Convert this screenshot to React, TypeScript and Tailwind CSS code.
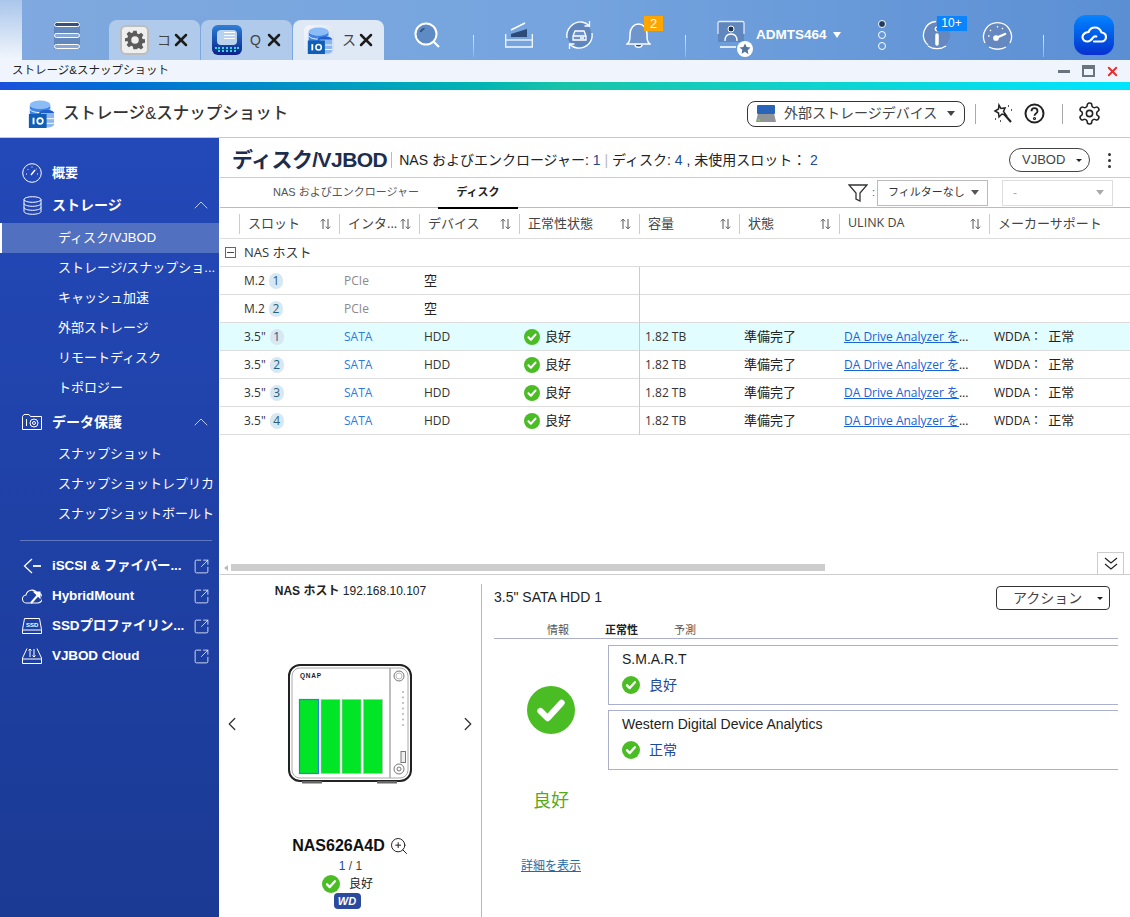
import React from "react";
import { ChevronLeft, ChevronRight, ChevronUp, SquareArrowOutUpRight, X, ZoomIn } from "lucide-react";

const cols = "grid grid-cols-[100px_80px_100px_120px_100px_100px_150px_140px]";

const headers = ["スロット", "インタ...", "デバイス", "正常性状態", "容量", "状態", "ULINK DA", "メーカーサポート"];

const disks = [
  { kind: "M.2", n: 1, bus: "PCIe", dev: "空" },
  { kind: "M.2", n: 2, bus: "PCIe", dev: "空" },
  { kind: '3.5"', n: 1, bus: "SATA", dev: "HDD", ok: true, selected: true },
  { kind: '3.5"', n: 2, bus: "SATA", dev: "HDD", ok: true },
  { kind: '3.5"', n: 3, bus: "SATA", dev: "HDD", ok: true },
  { kind: '3.5"', n: 4, bus: "SATA", dev: "HDD", ok: true },
];

const CheckDot = ({ size }: { size: number }) => (
  <svg width={size} height={size} viewBox="0 0 20 20" className="shrink-0">
    <circle cx="10" cy="10" r="10" fill="#4bbd24" />
    <path d="M5.600 10.400l3 3 5.800-6.400" fill="none" stroke="#fff" strokeWidth="2.600" strokeLinecap="round" strokeLinejoin="round" />
  </svg>
);

const SortIcon = () => (
  <svg width="11" height="12" viewBox="0 0 11 12" className="shrink-0" fill="none" stroke="#555" strokeWidth="1">
    <path d="M3 11V1.200M.8 3.400L3 1.200l2.200 2.200M8 1v9.800M5.800 8.600L8 10.800l2.200-2.200" />
  </svg>
);

const StorageLogo = ({ size }: { size: number }) => (
  <svg width={size} height={size} viewBox="0 0 28 30">
    <ellipse cx="13" cy="5" rx="11" ry="4.500" fill="#8cbcf5" />
    <path d="M2 5v12h22V5c0 2.500-5 4.500-11 4.500S2 7.500 2 5z" fill="#3f86e8" />
    <path d="M2 10c2 2.500 6 3.500 11 3.500S22 12.500 24 10" stroke="#fff" fill="none" />
    <ellipse cx="20" cy="14" rx="8" ry="3.500" fill="#1f5fd0" />
    <path d="M14 14h14v12c0 2-3 3.500-7 3.500h-7z" fill="#8db6ee" />
    <path d="M15 20h13M15 25h13" stroke="#fff" />
    <rect x="1" y="15" width="19" height="15" fill="#0f5fb8" />
    <rect x="5" y="19" width="2" height="7" fill="#fff" />
    <circle cx="13" cy="22.500" r="3" fill="none" stroke="#fff" strokeWidth="1.800" />
  </svg>
);

const GearTile = () => (
  <div className="w-[29px] h-[30px] rounded-md bg-[#efefef] border-2 border-[#bdbdbd] flex items-center justify-center">
    <svg width="20" height="20" viewBox="0 0 24 24" fill="#5c5c5c">
      <path fillRule="evenodd" d="M10 1h4l.6 3.200 2 .8 2.700-1.800 2.800 2.800-1.800 2.700.8 2 3.200.6v4l-3.200.6-.8 2 1.800 2.700-2.800 2.800-2.700-1.800-2 .8L14 23h-4l-.6-3.200-2-.8-2.700 1.800-2.800-2.800 1.800-2.700-.8-2L-.3 14v-4l3.200-.6.8-2L1.900 4.700l2.800-2.800 2.700 1.800 2-.8zM12 7.500a4.500 4.500 0 100 9 4.500 4.500 0 000-9z" />
    </svg>
  </div>
);

const QTile = () => (
  <div className="w-[30px] h-[30px] rounded-md bg-gradient-to-b from-[#2f7fd8] to-[#10218a] flex flex-col items-center pt-[5px]">
    <div className="w-[20px] h-[15px] rounded-sm bg-[#b9d3ef] flex flex-col gap-[2px] p-[2px] pl-[7px]">
      <div className="h-px bg-white" />
      <div className="h-px bg-white" />
      <div className="h-px bg-white" />
    </div>
    <div className="mt-[1px] w-[24px] h-[3px] border-b-2 border-dotted border-[#38d6e0]" />
    <div className="w-[18px] h-[3px] border-b-2 border-dotted border-[#38d6e0]" />
  </div>
);

const Tab = ({ icon, label, active }: { icon: React.ReactNode; label: string; active?: boolean }) => (
  <div className={`w-[91px] h-10 rounded-t-lg flex items-center pl-[11px] ${active ? "bg-[#dfe9f6]" : "bg-[#afcaea]"}`}>
    {icon}
    <span className="ml-2 w-[17px] text-[14px] text-[#444] leading-none">{label}</span>
    <X size={20} strokeWidth={3} className="-ml-[3px] text-[#1c1c1c]" />
  </div>
);

const TopSep = () => <div className="w-px h-[22px] mt-[22px] bg-gradient-to-b from-[#dbe7f6] to-[#8fb2e2]" />;

const TopBar = () => (
  <div className="h-[60px] shrink-0 flex bg-gradient-to-r from-[#7fa9df] via-[#75a4de] to-[#5b8fd4]">
    <div className="w-[22px] shrink-0 bg-gradient-to-b from-[#a9c6ea] to-[#f2f6fc]" />
    <div className="flex-1 h-[50px] self-end flex items-center">
      <div className="ml-[32px] w-[26px] flex flex-col gap-[6px] bg-[#6288bd]">
        <div className="h-[5px] rounded-full border border-white bg-[#34507c]" />
        <div className="h-[5px] rounded-full border border-white bg-[#88a9d6]" />
        <div className="h-[5px] rounded-full border border-white bg-[#88a9d6]" />
      </div>
      <div className="ml-[29px] self-end flex gap-px">
        <Tab icon={<GearTile />} label="コ" />
        <Tab icon={<QTile />} label="Q" />
        <Tab
          icon={
            <div className="w-[30px] h-[30px] rounded-md bg-gradient-to-br from-[#f4f7fb] to-[#cfdcec] flex items-center justify-center">
              <StorageLogo size={27} />
            </div>
          }
          label="ス"
          active
        />
      </div>
      <svg className="ml-[30px]" width="27" height="27" viewBox="0 0 27 27" fill="none" stroke="#fff" strokeWidth="2">
        <circle cx="12" cy="12" r="10.500" fill="#5f8bc4" />
        <path d="M6.500 10c.8-2 2-3 4-3.500" stroke="#2d4a78" strokeWidth="1.800" />
        <path d="M20 20l5 5" strokeWidth="2.200" />
      </svg>
      <div className="ml-[32px]"><TopSep /></div>
      <svg className="ml-[31px]" width="28" height="26" viewBox="0 0 28 26" fill="none">
        <path d="M.7 12v13h26.600V12" stroke="#f4f8fd" strokeWidth="1.300" />
        <path d="M1 18h26" stroke="#f4f8fd" strokeWidth="1.300" />
        <path d="M6 12l16-5v8H6z" fill="#2d4a78" />
        <path d="M6 8l14-7" stroke="#fff" strokeWidth="1.500" />
      </svg>
      <svg className="ml-[32px]" width="29" height="30" viewBox="0 0 29 30" fill="none" stroke="#fff" strokeWidth="1.300">
        <circle cx="14.500" cy="15" r="12" fill="#5f86bd" stroke="none" />
        <path d="M2 18C.5 9 8 1.500 17 2c3 .3 5 1.500 7 3.500M27 13c1.500 9-6 16-15 15-3-.3-5-1.500-7-3.500" />
        <path d="M24.500 1v5h-5M4.500 29v-5h5" />
        <path d="M10 11h9l2 5v4H8v-4z" fill="#6c92c8" />
        <path d="M8 16h13M15 18h4" />
      </svg>
      <div className="relative ml-[32px] w-[25px] h-[28px]">
        <svg width="25" height="28" viewBox="0 0 25 28" fill="none" stroke="#fff" strokeWidth="1.500">
          <path d="M1 23c3-2 3-5 3-10 0-6 4-10 8.500-10S21 7 21 13c0 5 0 8 3 10z" fill="#6e96cc" />
          <path d="M9 24c.5 3 6.500 3 7 0" fill="#2d4a78" />
        </svg>
        <span className="absolute left-[18px] top-[-5px] w-[19px] h-[15px] bg-[#ffa500] text-white text-[13px] leading-[15px] text-center">2</span>
      </div>
      <div className="ml-[34px]"><TopSep /></div>
      <div className="relative ml-[31px] w-[28px] h-[30px]">
        <svg width="28" height="30" viewBox="0 0 28 30" fill="none" stroke="#fff" strokeWidth="1.300">
          <path d="M1 2h26v20H1z" fill="#5f86bd" stroke="none" />
          <path d="M1 14V3a1.500 1.500 0 011.500-1.500h23A1.500 1.500 0 0127 3v11" strokeOpacity=".8" />
          <circle cx="14" cy="9" r="3" fill="#1f3557" strokeWidth="1" />
          <path d="M8 21c0-4 2-7 6-7s6 3 6 7" />
          <path d="M3 27h16" strokeWidth="1.600" />
        </svg>
        <div className="absolute left-[20px] top-[21px] w-4 h-4 rounded-full bg-white flex items-center justify-center">
          <svg width="12" height="12" viewBox="0 0 12 12">
            <path d="M6 .5l1.700 3.600 3.800.5-2.800 2.700.7 3.900L6 8.800l-3.400 1.900.7-3.900L.5 4.600l3.800-.5z" fill="#54749f" />
          </svg>
        </div>
      </div>
      <span className="ml-[11px] text-white text-[13.500px] font-bold">ADMTS464</span>
      <span className="ml-[6px] w-0 h-0 border-x-[4px] border-x-transparent border-t-[6px] border-t-white" />
      <div className="ml-[37px] flex flex-col gap-[3px]">
        <div className="w-[8px] h-[8px] rounded-full border border-white bg-[#23395d]" />
        <div className="w-[8px] h-[8px] rounded-full border border-white" />
        <div className="w-[8px] h-[8px] rounded-full border border-white" />
      </div>
      <div className="relative ml-[36px] w-[30px] h-[30px]">
        <svg width="30" height="30" viewBox="0 0 30 30" fill="none" stroke="#fff" strokeWidth="1.300">
          <circle cx="15" cy="15" r="13" fill="#6488bf" stroke="none" />
          <path d="M6 25A13.500 13.500 0 0114 1.500M24 26c-5 3.500-13 3.500-18 0" />
          <path d="M15 15v9" strokeWidth="3.500" strokeLinecap="round" />
          <circle cx="15" cy="9" r="1.800" />
        </svg>
        <span className="absolute left-[15px] top-[-4px] w-[30px] h-[15px] bg-[#0a84ff] text-white text-[12px] font-medium leading-[15px] text-center">10+</span>
      </div>
      <svg className="ml-[30px]" width="31" height="31" viewBox="0 0 31 31" fill="none" stroke="#fff" strokeWidth="1.300">
        <circle cx="15.500" cy="15.500" r="14" fill="#6488bf" stroke="none" />
        <path d="M3 23A14 14 0 1128 23" />
        <path d="M7 27c5 3 12 3 17 0" />
        <path d="M14 18l9-4" strokeWidth="2.400" strokeLinecap="round" />
        <path d="M6 16h1.500M8 10l1 1M15.500 6v1.500M21 8l-1 1" strokeWidth="1.300" />
        <circle cx="14" cy="18" r="2.200" fill="#fff" />
      </svg>
      <div className="ml-[30px]"><TopSep /></div>
      <div className="ml-[30px] w-10 h-10 rounded-xl bg-gradient-to-b from-[#0a84ff] to-[#0a2fd0] flex items-center justify-center">
        <svg width="26" height="18" viewBox="0 0 26 18" fill="none" stroke="#fff" strokeWidth="2.200" strokeLinecap="round" strokeLinejoin="round">
          <path d="M13 15.500h7.500a4.500 4.500 0 000-9c-1-3-3.800-5-6.500-5-3 0-5.500 1.800-6.500 4.500-3.300.3-6 2.600-6 5 0 2.800 2.400 4.500 5 4.500 3 0 4.200-2 5.200-3.500.8-1.300 2.100-2 3.600-1.500" />
        </svg>
      </div>
    </div>
  </div>
);

const TitleStrip = () => (
  <>
    <div className="h-[22px] shrink-0 flex items-center bg-[#f0f5fd] pl-3 pr-[10px]">
      <span className="text-[11.500px] text-[#222] flex-1">ストレージ&スナップショット</span>
      <div className="w-3 h-[3px] bg-[#6b7280]" />
      <div className="ml-3 w-[13px] h-3 border-2 border-t-4 border-[#6b7280]" />
      <X size={15} strokeWidth={3} className="ml-[10px] text-[#ee2a2a]" />
    </div>
    <div className="h-2 shrink-0 bg-gradient-to-r from-[#1a50dc] via-[#18c4a8] to-[#00e5ff]" />
  </>
);

const AppHeader = () => (
  <div className="h-12 shrink-0 flex items-center bg-white border-b border-[#c8c8c8] pl-[27px] pr-7">
    <StorageLogo size={28} />
    <span className="ml-[8px] text-[16.500px] font-medium text-[#333] flex-1">ストレージ&スナップショット</span>
    <div className="w-[218px] h-[26px] rounded-lg border border-[#333] flex items-center pl-2 pr-[9px]">
      <svg width="20" height="18" viewBox="0 0 20 18">
        <path d="M2 8h16l2 9H0z" fill="#8f9497" />
        <rect x="1" y="0" width="18" height="9" rx="1" fill="#2a64b8" />
        <circle cx="3" cy="15" r="1" fill="#6fdc4a" />
      </svg>
      <span className="ml-2 text-[14px] text-[#444] flex-1">外部ストレージデバイス</span>
      <span className="w-0 h-0 border-x-[4px] border-x-transparent border-t-[5px] border-t-[#444]" />
    </div>
    <div className="ml-[10px] w-px h-5 bg-[#aaa]" />
    <svg className="ml-4" width="21" height="21" viewBox="0 0 21 21" fill="none" stroke="#222" strokeWidth="1.500">
      <path d="M7 2l2 3.500 4-.5-1.500 3.500L14 12l-4-1-3 3-.5-4L3 8l3.500-2z" />
      <path d="M12 11l7 8" strokeWidth="2" />
      <path d="M16 3h1M19 7h1M3 16h1M8 18h1" />
    </svg>
    <svg className="ml-[11px]" width="21" height="21" viewBox="0 0 21 21" fill="none" stroke="#222" strokeWidth="2">
      <circle cx="10.500" cy="10.500" r="9" />
      <path d="M7.500 8.200c0-4 6-4 6 0 0 2.300-3 2.300-3 4.500" strokeWidth="1.800" />
      <circle cx="10.500" cy="15.500" r=".6" />
    </svg>
    <div className="ml-[17px] w-px h-5 bg-[#aaa]" />
    <svg className="ml-[14px]" width="25" height="25" viewBox="0 0 24 24" fill="none" stroke="#222" strokeWidth="1.500">
      <path d="M12.220 2h-.44a2 2 0 0 0-2 2v.18a2 2 0 0 1-1 1.730l-.43.25a2 2 0 0 1-2 0l-.15-.08a2 2 0 0 0-2.730.73l-.22.38a2 2 0 0 0 .73 2.730l.15.10a2 2 0 0 1 1 1.720v.51a2 2 0 0 1-1 1.740l-.15.09a2 2 0 0 0-.73 2.730l.22.38a2 2 0 0 0 2.730.73l.15-.08a2 2 0 0 1 2 0l.43.25a2 2 0 0 1 1 1.730V20a2 2 0 0 0 2 2h.44a2 2 0 0 0 2-2v-.18a2 2 0 0 1 1-1.730l.43-.25a2 2 0 0 1 2 0l.15.08a2 2 0 0 0 2.730-.73l.22-.39a2 2 0 0 0-.73-2.730l-.15-.08a2 2 0 0 1-1-1.740v-.5a2 2 0 0 1 1-1.740l.15-.09a2 2 0 0 0 .73-2.730l-.22-.38a2 2 0 0 0-2.730-.73l-.15.08a2 2 0 0 1-2 0l-.43-.25a2 2 0 0 1-1-1.730V4a2 2 0 0 0-2-2z" />
      <circle cx="12" cy="12" r="3" />
    </svg>
  </div>
);

const NavHead = ({ icon, label }: { icon: React.ReactNode; label: string }) => (
  <div className="h-8 flex items-center pl-[22px] pr-[6px] text-white">
    <div className="w-[20px] flex justify-center">{icon}</div>
    <span className="ml-[10px] flex-1 text-[14px] font-bold">{label}</span>
    <ChevronUp size={24} strokeWidth={0.8} className="text-[#e6ebf8]" />
  </div>
);

const NavItem = ({ label, active }: { label: string; active?: boolean }) => (
  <div className={`h-[30px] flex items-center text-[13px] text-white whitespace-nowrap ${active ? "bg-[#5270c0] border-l-2 border-white pl-[56px]" : "pl-[58px]"}`}>
    {label}
  </div>
);

const LinkItem = ({ icon, label }: { icon: React.ReactNode; label: string }) => (
  <div className="h-[30px] flex items-center pl-[22px] pr-[9px] text-white">
    <div className="w-5 flex justify-center">{icon}</div>
    <span className="ml-[10px] flex-1 whitespace-nowrap text-[13.500px] font-bold tracking-[-0.1px]">{label}</span>
    <SquareArrowOutUpRight size={17} strokeWidth={1.100} className="shrink-0 -ml-[4px]" />
  </div>
);

const Sidebar = () => (
  <div className="w-[219px] shrink-0 bg-gradient-to-b from-[#2348b8] to-[#1b3a94] pt-[19px]">
    <div className="h-8 flex items-center pl-[22px] text-white">
      <div className="w-5 flex justify-center">
        <svg width="20" height="20" viewBox="0 0 20 20" fill="none" stroke="#fff" strokeWidth="1">
          <circle cx="10" cy="10" r="9.300" />
          <path d="M4 11h1M5.500 6l.8.8M10 3.500v1M14.500 6l-.8.8M15 11h1" />
          <path d="M9 12l4-5" strokeWidth="1.400" />
        </svg>
      </div>
      <span className="ml-[10px] text-[13px] font-bold">概要</span>
    </div>
    <NavHead
      icon={
        <svg width="19" height="19" viewBox="0 0 19 19" fill="none" stroke="#fff" strokeWidth="1">
          <ellipse cx="9.500" cy="3.500" rx="8.500" ry="2.800" />
          <path d="M1 3.500v12c0 1.500 3.800 2.800 8.500 2.800s8.500-1.300 8.500-2.800v-12" />
          <path d="M1 7.500c0 1.500 3.800 2.800 8.500 2.800S18 9 18 7.500M1 11.500c0 1.500 3.800 2.800 8.500 2.800s8.500-1.300 8.500-2.800" />
        </svg>
      }
      label="ストレージ"
    />
    <div className="mt-[2px]">
      <NavItem label="ディスク/VJBOD" active />
      <NavItem label="ストレージ/スナップショ..." />
      <NavItem label="キャッシュ加速" />
      <NavItem label="外部ストレージ" />
      <NavItem label="リモートディスク" />
      <NavItem label="トポロジー" />
    </div>
    <div className="mt-[3px]">
      <NavHead
        icon={
          <svg width="20" height="16" viewBox="0 0 20 16" fill="none" stroke="#fff" strokeWidth="1">
            <path d="M.5 2.500V15.500h19v-13h-11L7 .5H2z" />
            <path d="M4.500 5v7" />
            <circle cx="12" cy="9" r="4" />
            <circle cx="12" cy="9" r="1.500" />
          </svg>
        }
        label="データ保護"
      />
    </div>
    <div className="mt-px">
      <NavItem label="スナップショット" />
      <NavItem label="スナップショットレプリカ" />
      <NavItem label="スナップショットボールト" />
    </div>
    <div className="mt-[11px] ml-[20px] mr-[7px] h-px bg-[#5f78bd]" />
    <div className="mt-[10px]">
      <LinkItem
        label="iSCSI & ファイバー..."
        icon={
          <svg width="18" height="16" viewBox="0 0 18 16" fill="none" stroke="#fff" strokeWidth="1.300">
            <path d="M9 1L1.500 8 9 15" />
            <path d="M10 8h8" strokeWidth="1.800" />
          </svg>
        }
      />
      <LinkItem
        label="HybridMount"
        icon={
          <svg width="20" height="15" viewBox="0 0 20 15" fill="none" stroke="#fff" strokeWidth="1.100">
            <path d="M5 14a4 4 0 01-1-8 6 6 0 0111-2 5 5 0 011 10z" />
            <path d="M9 14l8-9" strokeWidth="2" />
            <path d="M12 3h6v6z" fill="#fff" />
          </svg>
        }
      />
      <LinkItem
        label="SSDプロファイリン..."
        icon={
          <svg width="20" height="16" viewBox="0 0 20 16" fill="none" stroke="#fff" strokeWidth="1">
            <path d="M2.500.5h15l2 11v4H.5v-4z" />
            <path d="M.5 12h19" />
            <text x="4" y="9" fontSize="6" fontWeight="700" fill="#fff" stroke="none">SSD</text>
          </svg>
        }
      />
      <LinkItem
        label="VJBOD Cloud"
        icon={
          <svg width="20" height="16" viewBox="0 0 20 16" fill="none" stroke="#fff" strokeWidth="1">
            <path d="M5 .5L.5 10v5.500h19V10L15 .5" />
            <path d="M.5 11h19M8 1v8M6.500 2.500L8 1l1.500 1.500M12 9V1M10.500 7.500L12 9l1.500-1.500" />
          </svg>
        }
      />
    </div>
  </div>
);

const DiskTable = () => (
  <div className="flex-1 min-h-0 font-['Open_Sans','Noto_Sans_CJK_JP',sans-serif]">
    <div className={`${cols} h-[31px] pl-[19px] pt-px items-center border-b border-[#ddd] text-[13px] text-[#444]`}>
      {headers.map((h, i) => (
        <div key={h} className={`h-5 border-l border-[#ccc] flex items-center pl-2 ${i === 7 ? "" : "pr-[8px]"}`}>
          <span className={`flex-1 whitespace-nowrap ${i === 6 ? "text-[12.500px]" : ""}`}>{h}</span>
          {i < 7 && <SortIcon />}
        </div>
      ))}
    </div>
    <div className="h-7 flex items-center border-b border-[#ddd] pl-[5px]">
      <div className="w-[11px] h-[11px] border border-[#666] flex items-center justify-center">
        <div className="w-[7px] h-px bg-[#444]" />
      </div>
      <span className="ml-2 text-[13px] text-[#333]">NAS ホスト</span>
    </div>
    {disks.map((d) => (
      <div key={d.kind + d.n} className={`${cols} h-7 pl-5 items-center border-b border-[#ddd] text-[12px] text-[#333] ${d.selected ? "bg-[#e2fdff]" : ""}`}>
        <div className="pl-1 flex items-center">
          <span>{d.kind}</span>
          <span className="ml-[4px] w-[14px] h-[16px] rounded-full bg-[#d8e8f2] text-center leading-[16px] text-[#25607f]">{d.n}</span>
        </div>
        <div className={`pl-1 ${d.bus === "SATA" ? "text-[#2a7be4]" : "text-[#8a8a8a]"}`}>{d.bus}</div>
        <div className={`pl-1 ${d.dev === "空" ? "text-[13px] text-[#222]" : ""}`}>{d.dev}</div>
        <div className="pl-1 flex items-center">
          {d.ok && <CheckDot size={16} />}
          {d.ok && <span className="ml-[5px] text-[13px] text-[#222]">良好</span>}
        </div>
        <div className="h-7 -ml-px border-l border-[#ccc] pl-[5px] leading-[28px]">{d.ok && "1.82 TB"}</div>
        <div className="pl-1 text-[13px] text-[#222]">{d.ok && "準備完了"}</div>
        <div className="pl-1 whitespace-nowrap text-[#222]">
          {d.ok && (
            <>
              <span className="text-[#1a62d6] underline">DA Drive Analyzer を</span>...
            </>
          )}
        </div>
        <div className="pl-1 text-[#222] whitespace-nowrap">
          {d.ok && (
            <>
              WDDA： <span className="ml-[3px] text-[13px]">正常</span>
            </>
          )}
        </div>
      </div>
    ))}
  </div>
);

const NasDrawing = () => (
  <svg width="124" height="120" viewBox="0 0 124 120">
    <rect x="1" y="1" width="122" height="116" rx="11" fill="#fff" stroke="#222" strokeWidth="2" />
    <rect x="4" y="4" width="116" height="110" rx="8" fill="none" stroke="#aaa" />
    <path d="M102 4v110" stroke="#aaa" strokeWidth="1.500" />
    <text x="12" y="13.500" fontSize="6.500" fontWeight="800" letterSpacing=".8" fill="#222">QNAP</text>
    <rect x="11.500" y="35.500" width="19" height="74" fill="#00e526" stroke="#2a7fe0" strokeWidth="1.200" />
    <rect x="33" y="35.500" width="19" height="74" fill="#00e526" stroke="#bbb" strokeWidth=".6" />
    <rect x="54" y="35.500" width="19" height="74" fill="#00e526" stroke="#bbb" strokeWidth=".6" />
    <rect x="75.500" y="35.500" width="19" height="74" fill="#00e526" stroke="#bbb" strokeWidth=".6" />
    <circle cx="111" cy="12" r="5" fill="none" stroke="#777" />
    <circle cx="111" cy="12" r="3" fill="none" stroke="#bbb" />
    {[28, 33.500, 39, 44.500, 50, 55.500, 61].map((y) => (
      <circle key={y} cx="115" cy={y} r=".9" fill="#aaa" />
    ))}
    <rect x="113" y="87.500" width="4.500" height="11" fill="#eee" stroke="#777" />
    <circle cx="111" cy="105" r="5" fill="none" stroke="#777" />
    <circle cx="111" cy="105" r="2" fill="none" stroke="#777" />
    <rect x="14" y="117" width="20" height="2.500" fill="#666" />
    <rect x="89" y="117" width="20" height="2.500" fill="#666" />
  </svg>
);

const SmartCard = ({ title, status }: { title: string; status: string }) => (
  <div className="h-[60px] border-y border-l border-[#aab0cc] pl-[13px] pt-[5px]">
    <div className="text-[14px] leading-4 text-[#222]">{title}</div>
    <div className="mt-[8px] flex items-center h-[20px]">
      <CheckDot size={18} />
      <span className="ml-[9px] text-[14px] text-[#1c4a9c]">{status}</span>
    </div>
  </div>
);

const DetailPane = () => (
  <div className="relative h-[343px] shrink-0 border-t border-[#ccc] flex">
    <div className="w-[261px] shrink-0 flex flex-col items-center pt-[8px]">
      <div className="text-[12px] leading-4 text-[#222]"><b>NAS ホスト</b> 192.168.10.107</div>
      <div className="mt-[65px] w-full pl-px pr-[2px] flex items-center justify-between">
        <ChevronLeft size={22} strokeWidth={1.400} className="text-[#333]" />
        <NasDrawing />
        <ChevronRight size={22} strokeWidth={1.400} className="text-[#333]" />
      </div>
      <div className="mt-[52px] flex items-center h-5">
        <span className="text-[16px] font-bold text-[#111]">NAS626A4D</span>
        <ZoomIn size={20} strokeWidth={1.200} className="ml-[4px] text-[#222]" />
      </div>
      <div className="mt-[2px] text-[12px] leading-[16px] text-[#444]"><span className="text-[#1c4a9c]">1</span> / 1</div>
      <div className="flex items-center h-5 -ml-[6px]">
        <CheckDot size={18} />
        <span className="ml-[9px] text-[12px] text-[#222]">良好</span>
      </div>
      <div className="-mt-[1px] -ml-[7px] w-[27px] h-[16px] rounded-sm bg-[#2b4a9e] text-white text-[11px] font-black italic leading-[16px] text-center">WD</div>
    </div>
    <div className="mt-[9px] w-px bg-[#b5b5c5]" />
    <div className="flex-1 pl-3 pr-3 pt-[11px]">
      <div className="h-6 flex items-center justify-between">
        <span className="pb-[2px] text-[14px] text-[#222]">3.5" SATA HDD 1</span>
        <div className="w-[114px] h-6 mr-2 rounded border border-[#333] flex items-center pl-4 pr-[6px]">
          <span className="flex-1 text-[14px] text-[#444]">アクション</span>
          <span className="w-0 h-0 border-x-[3px] border-x-transparent border-t-[3px] border-t-[#222]" />
        </div>
      </div>
      <div className="h-[29px] pt-[12px] pl-[53px] flex items-center gap-[36px] text-[11px] text-[#555] border-b border-[#aab0cc]">
        <span>情報</span>
        <b className="text-[#222]">正常性</b>
        <span>予測</span>
      </div>
      <div className="flex">
        <div className="w-[114px] shrink-0 flex flex-col items-center">
          <div className="mt-[47px]"><CheckDot size={48} /></div>
          <div className="mt-[53px] text-[18px] leading-7 text-[#58a81c]">良好</div>
          <div className="mt-[43px] text-[12px] leading-4 text-[#1f6aa5] underline">詳細を表示</div>
        </div>
        <div className="flex-1 pt-[6px] flex flex-col gap-[5px]">
          <SmartCard title="S.M.A.R.T" status="良好" />
          <SmartCard title="Western Digital Device Analytics" status="正常" />
        </div>
      </div>
    </div>
  </div>
);

const Main = () => (
  <div className="flex-1 min-w-0 flex flex-col bg-white border-l border-[#fff]">
    <div className="h-10 shrink-0 flex items-center border-b border-[#ccc] pl-3 pr-[19px] pt-[5px]">
      <span className="text-[21px] font-bold text-[#1c2d4d] tracking-[-0.55px] whitespace-nowrap">ディスク/VJBOD</span>
      <span className="ml-1 w-px h-4 bg-[#bbb]" />
      <span className="ml-[7px] text-[14px] text-[#222] flex-1 whitespace-nowrap">
        NAS およびエンクロージャー: <span className="text-[#1c4a9c]">1</span>
        <span className="text-[#bbb]"> | </span>ディスク: <span className="text-[#1c4a9c]">4</span> , 未使用スロット： <span className="text-[#1c4a9c]">2</span>
      </span>
      <div className="w-[81px] h-6 rounded-full border border-[#444] flex items-center pl-3 pr-[7px]">
        <span className="flex-1 text-[13px] text-[#444]">VJBOD</span>
        <span className="w-0 h-0 border-x-[3px] border-x-transparent border-t-[3px] border-t-[#222]" />
      </div>
      <div className="ml-[18px] flex flex-col gap-[3px]">
        <div className="w-[3px] h-[3px] rounded-full bg-[#333]" />
        <div className="w-[3px] h-[3px] rounded-full bg-[#333]" />
        <div className="w-[3px] h-[3px] rounded-full bg-[#333]" />
      </div>
    </div>
    <div className="h-[30px] shrink-0 flex border-b border-[#bbb] pl-[53px]">
      <div className="w-[165px] flex items-center text-[11px] text-[#555] whitespace-nowrap">NAS およびエンクロージャー</div>
      <div className="w-20 -mb-px h-[31px] border-b-2 border-black flex items-center justify-center text-[11px] font-bold text-[#222]">ディスク</div>
      <div className="flex-1 flex items-center justify-end pr-[17px]">
        <svg width="20" height="18" viewBox="0 0 20 18" fill="none" stroke="#333" strokeWidth="1.300">
          <path d="M1 1h18l-7 8v8l-4-2V9z" />
        </svg>
        <span className="ml-1 mr-[2px] text-[11px] text-[#555]">:</span>
        <div className="w-[111px] h-[26px] border border-[#bbb] flex items-center pl-[10px] pr-2">
          <span className="flex-1 text-[11px] text-[#333] whitespace-nowrap">フィルターなし</span>
          <span className="w-0 h-0 border-x-[4px] border-x-transparent border-t-[5px] border-t-[#555]" />
        </div>
        <div className="ml-[14px] w-[111px] h-[26px] border border-[#ddd] flex items-center pl-[10px] pr-2">
          <span className="flex-1 text-[12px] text-[#aaa]">-</span>
          <span className="w-0 h-0 border-x-[4px] border-x-transparent border-t-[5px] border-t-[#aaa]" />
        </div>
      </div>
    </div>
    <DiskTable />
    <div className="relative h-[10px] shrink-0 pl-[4px] flex items-start">
      <div className="mt-[1px] w-0 h-0 border-y-[3px] border-y-transparent border-r-[4px] border-r-[#bbb]" />
      <div className="ml-[3px] w-[594px] h-[7px] bg-[#cdcdcd]" />
      <div className="absolute right-[6px] bottom-0 w-[27px] h-[22px] bg-white border-x border-t border-[#ccc] flex items-center justify-center">
        <svg width="14" height="13" viewBox="0 0 14 13" fill="none" stroke="#222" strokeWidth="1.200">
          <path d="M1 1l6 5 6-5M1 7l6 5 6-5" />
        </svg>
      </div>
    </div>
    <DetailPane />
  </div>
);

export default function App() {
  return (
    <div className="w-[1130px] h-[917px] overflow-hidden flex flex-col font-['Liberation_Sans','Noto_Sans_CJK_JP',sans-serif]">
      <TopBar />
      <TitleStrip />
      <AppHeader />
      <div className="flex-1 min-h-0 flex">
        <Sidebar />
        <Main />
      </div>
    </div>
  );
}
